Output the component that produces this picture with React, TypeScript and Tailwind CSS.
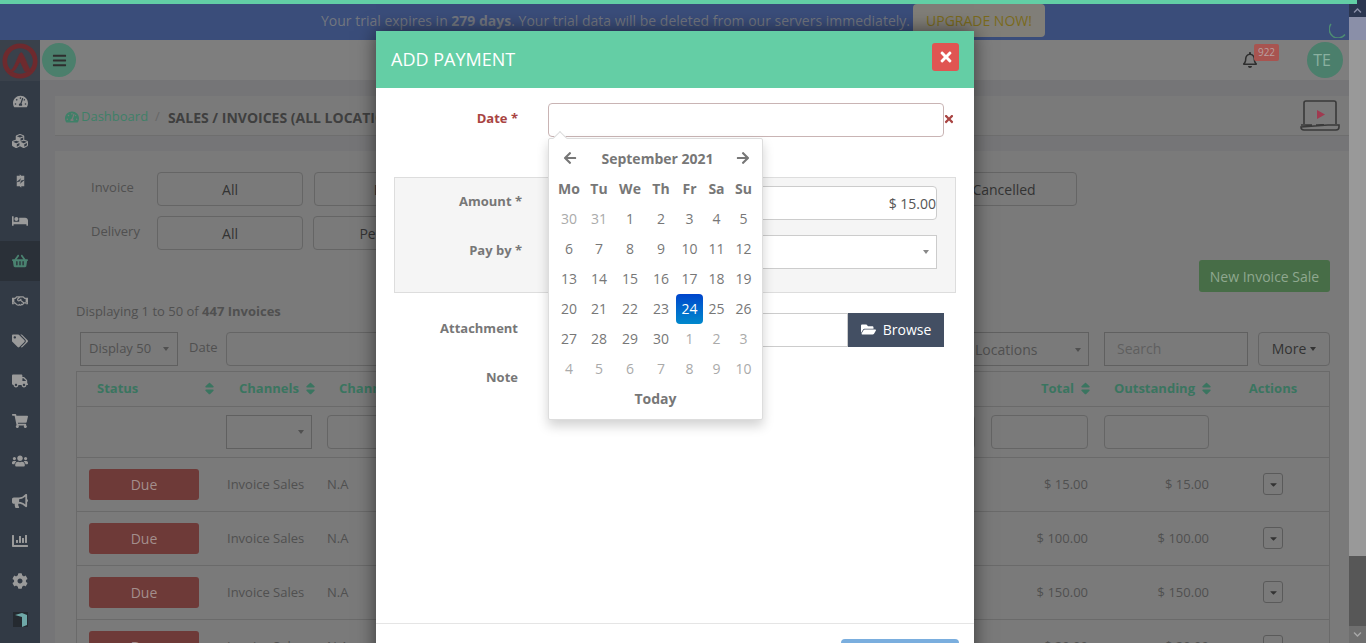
import type { ReactNode } from "react";
import {
  FaArrowLeft, FaArrowRight, FaBed, FaBullhorn, FaCaretDown, FaChartBar, FaCog, FaCubes,
  FaFolderOpen, FaRegBell, FaRegHandshake, FaShoppingBasket, FaShoppingCart, FaSort,
  FaTachometerAlt, FaTags, FaTimes, FaTruck, FaUsers, FaBars, FaChevronUp, FaChevronDown,
} from "react-icons/fa";

function SplitBolt({ className = "" }: { className?: string }) {
  return (
    <svg viewBox="0 0 12 18" className={className}>
      <path d="M1 2 H5 V0 L7 2 H11 V16 H7 V18 L5 16 H1Z" fill="currentColor" />
      <path d="M0 11 L7 5 L5 9 L12 7 L5 13 L7 9Z" fill="#323a45" />
    </svg>
  );
}

const NAV = [FaTachometerAlt, FaCubes, SplitBolt, FaBed, FaShoppingBasket, FaRegHandshake, FaTags, FaTruck, FaShoppingCart, FaUsers, FaBullhorn, FaChartBar, FaCog];

const CAL = [
  ["30", "31", "1", "2", "3", "4", "5"],
  ["6", "7", "8", "9", "10", "11", "12"],
  ["13", "14", "15", "16", "17", "18", "19"],
  ["20", "21", "22", "23", "24", "25", "26"],
  ["27", "28", "29", "30", "1", "2", "3"],
  ["4", "5", "6", "7", "8", "9", "10"],
];

const ROWS = [
  ["$ 15.00", "$ 15.00"],
  ["$ 100.00", "$ 100.00"],
  ["$ 150.00", "$ 150.00"],
  ["$ 20.00", "$ 20.00"],
];

const COLS = "grid grid-cols-[144px_100px_1fr_123px_121px_110px]";

function isOld(row: number, col: number) {
  return (row === 0 && col < 2) || (row === 4 && col > 3) || row === 5;
}

function Sort() {
  return <FaSort className="text-[15px] text-[#3a7560]" />;
}

function Caret({ className = "" }: { className?: string }) {
  return <span className={`w-0 h-0 border-x-[3px] border-x-transparent border-t-[4px] ${className}`} />;
}

function FilterBtn({ children, className = "w-[146px]" }: { children?: ReactNode; className?: string }) {
  return (
    <div className={`h-[34px] border border-[#656565] rounded-[4px] flex items-center justify-center text-[14px] text-[#333] ${className}`}>
      {children}
    </div>
  );
}

export default function App() {
  return (
    <div className="relative h-[643px] w-[1366px] overflow-hidden flex bg-[#757577] text-[14px] font-['Open_Sans',sans-serif]">
      {/* progress line */}
      <div className="absolute left-0 top-0 h-1 w-[1357px] bg-[#62cea5] z-20" />

      <div className="w-[1349px] flex flex-col shrink-0">
        {/* Trial banner */}
        <div className="relative mt-1 h-9 shrink-0 bg-[#3a4d7a] pl-[17px] flex items-start justify-center text-[#72767f]">
          <span className="mt-[6px]">Your trial expires in <b>279 days</b>. Your trial data will be deleted from our servers immediately.</span>
          <span className="ml-[3px] h-[33px] w-[132px] rounded-[4px] bg-[#807e78] text-[#7a6a1c] flex items-center justify-center">UPGRADE NOW!</span>
          <svg viewBox="0 0 20 20" className="absolute right-0 top-[14px] w-5 h-5" fill="none" stroke="#4d8c73" strokeWidth="1.5">
            <path d="M2 6 A8.5 8.5 0 0 0 16 16.5" />
          </svg>
        </div>

        <div className="flex flex-1 min-h-0">
          {/* Sidebar */}
          <div className="w-10 shrink-0 bg-[#323a45] flex flex-col items-center">
            <div className="h-[41px] w-full flex items-center justify-center bg-[#3a414b]">
              <svg viewBox="0 0 40 40" className="w-[38px] h-[38px]" fill="none" stroke="#6e2a2e">
                <circle cx="20" cy="20" r="16" strokeWidth="5" />
                <path d="M7 31 C14 32 17 14 21 11 C24 11 28 26 32 31 L25 31 C23 27 21 22 20 21 C17 25 14 35 7 31Z" fill="#6e2a2e" strokeWidth="0.5" />
              </svg>
            </div>
            {NAV.map((Icon, i) => (
              <div key={i} className={`h-10 w-full shrink-0 flex items-center justify-center ${i === 4 ? "bg-[#2a3038] text-[#4a8270]" : "text-[#9a9a9a]"}`}>
                <Icon className={i === 2 ? "w-[9px] h-[14px]" : i === 0 ? "text-[15px]" : "text-[16px]"} />
              </div>
            ))}
            <div className="pt-[11px]">
              <svg viewBox="0 0 15 15" className="w-[15px] h-[15px]">
                <rect width="15" height="15" fill="#252a30" />
                <path d="M2 3 L9 1 L14 3 V13 L9 15 L9 5Z" fill="#6fa8a8" />
              </svg>
            </div>
          </div>

          {/* Main */}
          <div className="flex-1 min-w-0 flex flex-col">
            <div className="h-10 shrink-0 bg-[#7e7e7e] flex items-center pl-[2px] relative">
              <div className="w-[34px] h-[34px] rounded-full bg-[#4b7f6c] flex items-center justify-center">
                <FaBars className="text-[15px] text-[#2e2e2e]" />
              </div>
              <div className="ml-auto relative mr-[91px]">
                <FaRegBell className="text-[16px] text-[#2e2e2e]" />
                <span className="absolute left-[12px] top-[-8px] w-[25px] h-[17px] rounded-[2px] bg-[#a85450] text-[#b9a0a0] text-[10px] flex items-center justify-center">922</span>
              </div>
              <div className="absolute left-[1267px] top-[2px] w-9 h-9 rounded-full bg-[#4b7f6c] text-[#8ab0a0] text-[16px] flex items-center justify-center pr-[6px]">TE</div>
            </div>

            <div className="flex-1 min-h-0 pl-[15px] pt-4">
              {/* Breadcrumb */}
              <div className="h-10 bg-[#7a7a7a] border-b border-[#6e6e6e] flex items-center pl-[10px] pr-[9px]">
                <FaTachometerAlt className="text-[14px] text-[#3f8068] mr-[2px] mt-[3px]" />
                <span className="text-[13px] text-[#3f8068] mt-[3px]">Dashboard</span>
                <span className="text-[#666] mx-[7px] text-[13px] mt-[3px]">/</span>
                <b className="text-[#3f3f3f] ml-[1px] mt-[3px] text-[14px]">SALES / INVOICES (ALL LOCATIONS)</b>
                <svg viewBox="0 0 40 32" className="ml-auto w-10 h-8" fill="none" stroke="#3a3a3a" strokeWidth="1.6">
                  <path d="M4 24 V3 Q4 1 6 1 H34 Q36 1 36 3 V24" />
                  <path d="M1 25 H12 M16 25 H24 M28 25 H39 V27 Q39 30 36 30 H4 Q1 30 1 27Z" />
                  <path d="M17 10 L25 14.5 L17 19Z" fill="#a03a50" stroke="none" />
                </svg>
              </div>

              {/* Panel */}
              <div className="mt-[15px] h-[492px] bg-[#7a7a7a] pl-[21px] pr-[19px] relative">
                <div className="flex items-start pt-[21px] pl-[15px]">
                  <span className="w-[66px] text-[13px] text-[#505050] mt-[6px]">Invoice</span>
                  <div className="w-[920px] flex gap-[11px]">
                    <FilterBtn>All</FilterBtn>
                    <FilterBtn>Due</FilterBtn>
                    <FilterBtn className="flex-1">Partial</FilterBtn>
                    <FilterBtn>Cancelled</FilterBtn>
                  </div>
                </div>
                <div className="flex items-start pt-[10px] pl-[15px]">
                  <span className="w-[66px] text-[13px] text-[#505050] mt-[6px]">Delivery</span>
                  <div className="w-[800px] flex gap-[10px]">
                    <FilterBtn>All</FilterBtn>
                    <FilterBtn>Pending</FilterBtn>
                    <FilterBtn className="flex-1">Delivered</FilterBtn>
                  </div>
                </div>

                <div className="flex justify-end mt-[10px]">
                  <div className="w-[131px] h-8 rounded-[3px] bg-[#476d47] text-[#8fa88f] flex items-center justify-center">New Invoice Sale</div>
                </div>

                <div className="mt-[10px] text-[13px] text-[#505050]">Displaying 1 to 50 of <b>447 Invoices</b></div>

                <div className="mt-[10px] pl-1 flex items-start text-[#505050]">
                  <div className="w-[98px] h-[34px] border border-[#606060] flex items-center pl-[8px] pr-[8px] justify-between text-[13px]">
                    Display 50 <Caret className="border-t-[#505050]" />
                  </div>
                  <span className="ml-[11px] w-[37px] mt-[6px] text-[13px]">Date</span>
                  <div className="flex-1 h-[34px] border border-[#656565] rounded-[4px]" />
                  <div className="w-[130px] h-[34px] border border-[#606060] flex items-center justify-between pl-[15px] pr-[7px] pt-[2px]">
                    Locations <Caret className="border-t-[#505050]" />
                  </div>
                  <div className="ml-[15px] w-[144px] h-[34px] border border-[#606060] pl-3 flex items-center text-[#5f5f5f]">Search</div>
                  <div className="ml-[10px] w-[72px] h-[34px] border border-[#656565] rounded-[4px] flex items-center justify-center gap-[4px] text-[#333]">
                    More <Caret className="border-t-[#333]" />
                  </div>
                </div>

                {/* Table */}
                <div className="mt-[5px] border-x border-t border-[#6a6a6a] text-[13px]">
                  <div className={`${COLS} h-[35px] items-center border-b border-[#6a6a6a] font-bold text-[#3a7560]`}>
                    <div className="flex items-center justify-between pl-5 pr-[4px]">Status <Sort /></div>
                    <div className="flex items-center gap-[4px] pl-[18px]">Channels <Sort /></div>
                    <div className="pl-[18px] flex items-center justify-end pr-[2px]">Channel Ref <span className="ml-auto"><Sort /></span></div>
                    <div className="flex items-center justify-end gap-[4px] pr-[5px]">Total <Sort /></div>
                    <div className="flex items-center justify-end gap-[4px] pr-[5px]">Outstanding <Sort /></div>
                    <div className="text-center pr-[2px]">Actions</div>
                  </div>
                  <div className={`${COLS} h-[51px] items-center border-b border-[#6a6a6a]`}>
                    <div />
                    <div className="pl-[5px]">
                      <div className="w-[86px] h-[34px] border border-[#606060] flex items-center justify-end pr-[7px]"><Caret className="border-t-[#505050]" /></div>
                    </div>
                    <div className="pl-[6px]"><div className="h-[34px] border border-[#656565] rounded-[4px]" /></div>
                    <div className="pl-[16px] pr-[10px]"><div className="h-[34px] border border-[#656565] rounded-[4px]" /></div>
                    <div className="pl-[6px] pr-[10px]"><div className="h-[34px] border border-[#656565] rounded-[4px]" /></div>
                    <div />
                  </div>
                  {ROWS.map((r, i) => (
                    <div key={i} className={`${COLS} h-[54px] items-center border-b border-[#6a6a6a] text-[#505050]`}>
                      <div className="pl-3">
                        <div className="w-[110px] h-[31px] rounded-[3px] bg-[#6e3a38] text-[#a38e8c] text-[14px] flex items-center justify-center">Due</div>
                      </div>
                      <div className="pl-[6px] pt-[1px]">Invoice Sales</div>
                      <div className="pl-[6px] pt-[1px]">N.A</div>
                      <div className="text-right pr-[10px] pt-[2px]">{r[0]}</div>
                      <div className="text-right pr-[10px] pt-[2px]">{r[1]}</div>
                      <div className="pl-[44px]">
                        <div className="w-5 h-[22px] border border-[#5a5a5a] rounded-[3px] flex items-center justify-center"><FaCaretDown className="text-[11px] text-[#333]" /></div>
                      </div>
                    </div>
                  ))}
                </div>
              </div>
            </div>
          </div>
        </div>
      </div>

      {/* Scrollbar */}
      <div className="w-[17px] shrink-0 flex flex-col bg-[#999]">
        <div className="h-[17px] bg-[#2b3650] flex items-end justify-center pb-[2px]"><FaChevronUp className="text-[9px] text-[#8a8fa8]" /></div>
        <div className="h-[23px] bg-[#8a8fa8]" />
        <div className="flex-1" />
        <div className="h-[70px] bg-[#575757]" />
        <div className="h-[17px] bg-[#6f6f6f] flex items-center justify-center"><FaChevronDown className="text-[9px] text-[#a8a8a8]" /></div>
      </div>

      {/* Add payment modal */}
      <div className="absolute left-[376px] top-[31px] w-[598px] h-[640px] bg-white shadow-[0_0_18px_rgba(0,0,0,0.55)] z-10 text-[#777]">
        <div className="h-[57px] bg-[#64cea5] flex items-start justify-between px-[15px] pt-[12px]">
          <span className="text-[18px] text-white mt-[3px]">ADD PAYMENT</span>
          <div className="w-[27px] h-[28px] rounded-[3px] bg-[#e05552] flex items-center justify-center"><FaTimes className="text-[16px] text-white" /></div>
        </div>
        <div className="h-[536px] border-b border-[#e5e5e5] pt-[15px] relative">
          <div className="flex items-center h-[34px]">
            <label className="w-[142px] text-right text-[13px] font-bold text-[#a94442] -mt-[2px]">Date *</label>
            <div className="ml-[30px] w-[396px] h-[34px] border border-[#c9b4b4] rounded-[4px]" />
            <FaTimes className="-ml-px text-[12px] text-[#a94442] -mt-[3px]" />
          </div>

          <div className="mt-[40px] mx-[18px] h-[116px] bg-[#f5f5f5] border border-[#ddd] pt-2 pr-[18px]">
            <div className="flex h-[34px]">
              <label className="w-[127px] text-right text-[13px] font-bold mt-[6px]">Amount *</label>
              <div className="ml-[26px] flex-1 h-[34px] bg-white border border-[#ccc] rounded-[4px] flex items-center justify-end text-[#555]">$ 15.00</div>
            </div>
            <div className="flex h-[34px] mt-[15px]">
              <label className="w-[127px] text-right text-[13px] font-bold mt-[6px]">Pay by *</label>
              <div className="ml-[26px] flex-1 h-[34px] bg-white border border-[#ccc] flex items-center justify-end pr-[7px]"><Caret className="border-t-[#888]" /></div>
            </div>
          </div>

          <div className="flex mt-[20px] h-[34px]">
            <label className="w-[142px] text-right text-[13px] font-bold mt-[6px]">Attachment</label>
            <div className="ml-[30px] w-[300px] border border-[#ccc]" />
            <div className="w-[96px] bg-[#434f63] text-white flex items-center justify-center gap-[7px] pb-[1px]"><FaFolderOpen className="text-[15px]" /> Browse</div>
          </div>
          <label className="block mt-[21px] w-[142px] text-right text-[13px] font-bold">Note</label>

          {/* Date picker */}
          <div className="absolute left-[172px] top-[50px] w-[215px] h-[282px] bg-white border border-[#ddd] shadow-[0_6px_12px_rgba(0,0,0,0.18)] pt-[4px] pl-[5px] rounded-[2px]">
            <span className="absolute left-[6px] -top-[6px] w-[10px] h-[10px] rotate-45 bg-white border-l border-t border-[#ddd]" />
            <div className="flex h-[30px] items-center w-[203px] text-[#777]">
              <FaArrowLeft className="ml-[9px] text-[14px]" />
              <b className="flex-1 text-center text-[14px] pl-[2px]">September 2021</b>
              <FaArrowRight className="mr-[7px] text-[14px]" />
            </div>
            <div className="grid grid-cols-[30px_30px_32px_30px_27px_27px_27px] h-[30px] items-center text-center font-bold text-[14px]">
              {["Mo", "Tu", "We", "Th", "Fr", "Sa", "Su"].map(d => <div key={d}>{d}</div>)}
            </div>
            <div className="mt-px">
              {CAL.map((week, i) => (
                <div key={i} className="grid grid-cols-[30px_30px_32px_30px_27px_27px_27px] h-[30px] items-center text-center text-[14px]">
                  {week.map((d, j) => {
                    const active = i === 3 && j === 4;
                    return (
                      <div key={j} className={`h-[30px] leading-[30px] ${active ? "rounded-[4px] bg-gradient-to-b from-[#0044cc] to-[#0088cc] text-white" : isOld(i, j) ? "text-[#aaa]" : ""}`}>{d}</div>
                    );
                  })}
                </div>
              ))}
            </div>
            <div className="h-[28px] w-[203px] flex items-center justify-center font-bold text-[14px]">Today</div>
          </div>
        </div>
        <div className="flex justify-end pr-[15px] pt-[15px]">
          <div className="w-[118px] h-10 rounded-[4px] bg-[#7aaede]" />
        </div>
      </div>
    </div>
  );
}
